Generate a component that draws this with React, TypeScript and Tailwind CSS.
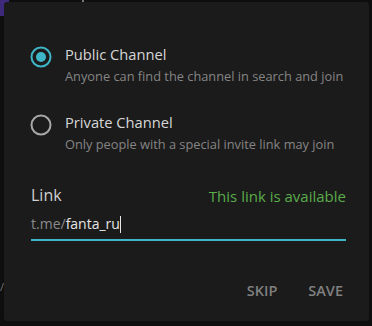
import React from "react";

function Radio({ checked }: { checked: boolean }) {
  return (
    <svg width="24" height="24" viewBox="0 0 24 24" className="shrink-0">
      <circle cx="12" cy="12" r="9.5" fill="none" stroke={checked ? "#3fb6c8" : "#a8a8a8"} strokeWidth="2" />
      {checked && <circle cx="12" cy="12" r="5" fill="#3fb6c8" />}
    </svg>
  );
}

export default function App() {
  return (
    <div className="relative w-[372px] h-[326px] bg-[#0e0e0e] overflow-hidden" style={{ fontFamily: '"Open Sans", sans-serif' }}>
      <div className="absolute left-0 top-0 w-[9px] h-[16px] bg-[#3d2a7a]" />
      <div className="absolute left-[82px] top-0 w-[2px] h-[2px] bg-[#777]" />
      <div className="absolute left-0 top-[281px] text-[11px] text-[#777] leading-none">/</div>
      <div className="absolute left-[4px] top-[2px] w-[365px] h-[319px] bg-[#1b1b1b] rounded-[3px] flex flex-col">
        <div className="pl-[25px] pr-[20px] pt-[42px] flex flex-col gap-[27px]">
          <div className="flex gap-[12px]">
            <div className="pt-[1px]"><Radio checked /></div>
            <div className="flex flex-col">
              <div className="text-[14.7px] leading-[20px] text-[#d6d6d6]">Public Channel</div>
              <div className="text-[12.8px] leading-[18px] text-[#858585] mt-[3px]">Anyone can find the channel in search and join</div>
            </div>
          </div>
          <div className="flex gap-[12px]">
            <div className="pt-[1px]"><Radio checked={false} /></div>
            <div className="flex flex-col">
              <div className="text-[14.7px] leading-[20px] text-[#d6d6d6]">Private Channel</div>
              <div className="text-[12.8px] leading-[18px] text-[#858585] mt-[3px]">Only people with a special invite link may join</div>
            </div>
          </div>
        </div>
        <div className="pl-[27px] pr-[23px] pt-[32px]">
          <div className="flex justify-between items-end">
            <div className="text-[16px] leading-[21px] text-[#cfcfcf]">Link</div>
            <div className="text-[15px] leading-[20px] text-[#5aab4a]">This link is available</div>
          </div>
          <div className="mt-[8px] text-[14px] leading-[20px] flex items-center">
            <span className="text-[#8a8a8a]">t.me/</span>
            <span className="text-[#e6e6e6]">fanta_ru</span>
            <span className="inline-block w-[1px] h-[17px] bg-[#e6e6e6]" />
          </div>
          <div className="mt-[5px] h-[2px] bg-[#3fb6c8]" />
        </div>
        <div className="mt-auto mb-[19px] pr-[26px] flex justify-end gap-[31px] text-[14.5px] font-semibold text-[#808080]">
          <span>SKIP</span>
          <span>SAVE</span>
        </div>
      </div>
    </div>
  );
}
